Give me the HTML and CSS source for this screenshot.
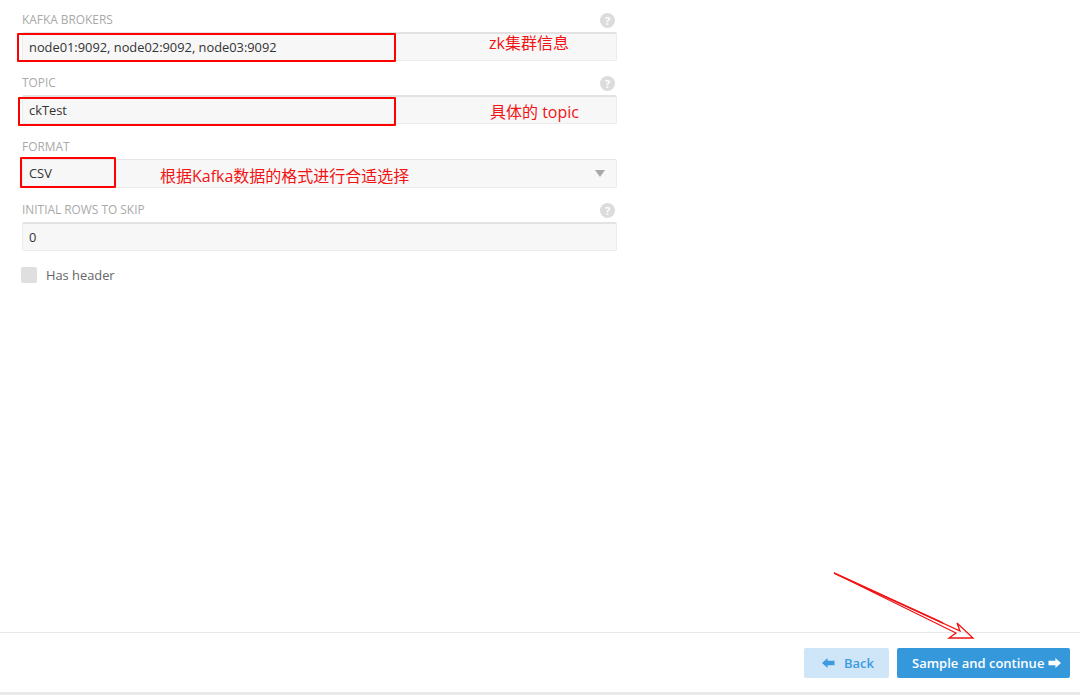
FILE: index.html
```html
<!DOCTYPE html>
<html lang="en">
<head>
  <meta charset="UTF-8">
  <title>Load data</title>
  <link rel="stylesheet" href="styles.css">
</head>
<body>
  <div class="page">
    <div class="form">
      <div class="field">
        <div class="field-label"><span>KAFKA BROKERS</span><span class="help">?</span></div>
        <div class="input">node01:9092, node02:9092, node03:9092</div>
      </div>
      <div class="field">
        <div class="field-label"><span>TOPIC</span><span class="help">?</span></div>
        <div class="input">ckTest</div>
      </div>
      <div class="field">
        <div class="field-label"><span>FORMAT</span></div>
        <div class="input select">CSV<span class="caret"></span></div>
      </div>
      <div class="field">
        <div class="field-label"><span>INITIAL ROWS TO SKIP</span><span class="help">?</span></div>
        <div class="input">0</div>
      </div>
      <label class="check"><span class="box"></span>Has header</label>
    </div>

    <div class="footer">
      <button class="btn btn-back">
        <svg class="arrow" viewBox="0 0 14 12"><path d="M0 6 6 .5V3.5H13.5V8.500H6V11.500Z"/></svg>
        Back
      </button>
      <button class="btn btn-next">
        Sample and continue
        <svg class="arrow" viewBox="0 0 14 12"><path d="M14 6 8 .5V3.500H.5V8.500H8V11.500Z"/></svg>
      </button>
    </div>
    <div class="bottom-line"></div>

    <!-- annotations drawn on top of the screenshot -->
    <div class="mark mark-brokers"></div>
    <div class="mark mark-topic"></div>
    <div class="mark mark-format"></div>
    <div class="note note-brokers">zk集群信息</div>
    <div class="note note-topic">具体的 topic</div>
    <div class="note note-format">根据Kafka数据的格式进行合适选择</div>
    <svg class="pointer" width="160" height="80" viewBox="0 0 160 80">
      <path d="M1 1 127 59 124 51 140 66 116 66 123 61 1 1" fill="none" stroke="#f01414" stroke-width="1.300"/>
      <path d="M1 1 110 51" fill="none" stroke="#f01414" stroke-width="1.500"/>
    </svg>
  </div>
</body>
</html>
```

FILE: styles.css
```css
* {
  box-sizing: border-box;
}

body {
  margin: 0;
  background: #fff;
  color: #333;
  font-family: 'Open Sans', sans-serif;
  font-size: 12.850px;
}

.page {
  position: relative;
  display: flex;
  flex-direction: column;
  height: 695px;
  overflow: hidden;
}

.form {
  flex: 1;
  width: 617px;
  padding: 9px 0 0 22px;
}

.field {
  margin-bottom: 12px;
}

.field-label {
  display: flex;
  justify-content: space-between;
  align-items: center;
  height: 20px;
  margin-bottom: 2.500px;
  color: #a9a9a9;
  font-size: 11.900px;
  line-height: 15px;
}

.help {
  width: 15px;
  height: 15px;
  margin: 2px 2px 0 0;
  border-radius: 50%;
  background: #dcdcdc;
  color: #fff;
  font-size: 11px;
  font-weight: 700;
  line-height: 15px;
  text-align: center;
}

.input {
  position: relative;
  height: 29px;
  padding-left: 6px;
  border: 1px solid #ececec;
  border-top: 2px solid #e2e2e2;
  border-radius: 2px;
  background: #f7f7f7;
  line-height: 26px;
}

.select {
  border-top: 1px solid #e6e6e6;
  line-height: 27px;
}

.caret {
  position: absolute;
  top: 10px;
  right: 11px;
  border-top: 7px solid #a8a8a8;
  border-left: 5px solid transparent;
  border-right: 5px solid transparent;
}

.check {
  display: flex;
  align-items: center;
  gap: 9px;
  margin-left: -1px;
  margin-top: 15px;
  color: #666;
}

.box {
  width: 16px;
  height: 16px;
  border-radius: 2px;
  background: #dfdfdf;
}

.footer {
  display: flex;
  justify-content: flex-end;
  gap: 8px;
  height: 60px;
  padding: 15px 10px 0 0;
  border-top: 1px solid #e8e8e8;
}

.bottom-line {
  height: 3px;
  background: #e9e9e9;
}

.btn {
  display: flex;
  align-items: center;
  height: 30px;
  border: none;
  border-radius: 2px;
  font-family: inherit;
  font-size: 13px;
}

.btn-back {
  gap: 9px;
  width: 85px;
  padding-left: 18px;
  background: #cfe6f8;
  color: #3e9be0;
  font-weight: 600;
}

.btn-next {
  gap: 4px;
  width: 173px;
  padding-left: 15px;
  background: #3498db;
  color: #fff;
  font-weight: 600;
}

.arrow {
  width: 13px;
  height: 12px;
  fill: currentColor;
}

.mark {
  position: absolute;
  border: 2px solid #f00;
  border-radius: 1px;
}

.mark-brokers {
  left: 17px;
  top: 33px;
  width: 379px;
  height: 29px;
}

.mark-topic {
  left: 18px;
  top: 97px;
  width: 378px;
  height: 29px;
}

.mark-format {
  left: 20px;
  top: 157px;
  width: 96px;
  height: 31px;
}

.note {
  position: absolute;
  color: #f01414;
  font-family: 'Open Sans', 'Noto Sans CJK SC', sans-serif;
  font-size: 16px;
  line-height: 20px;
  white-space: nowrap;
}

.note-brokers {
  left: 489px;
  top: 33px;
}

.note-topic {
  left: 490px;
  top: 102px;
}

.note-format {
  left: 160px;
  top: 166px;
}

.pointer {
  position: absolute;
  left: 833px;
  top: 572px;
}
```
